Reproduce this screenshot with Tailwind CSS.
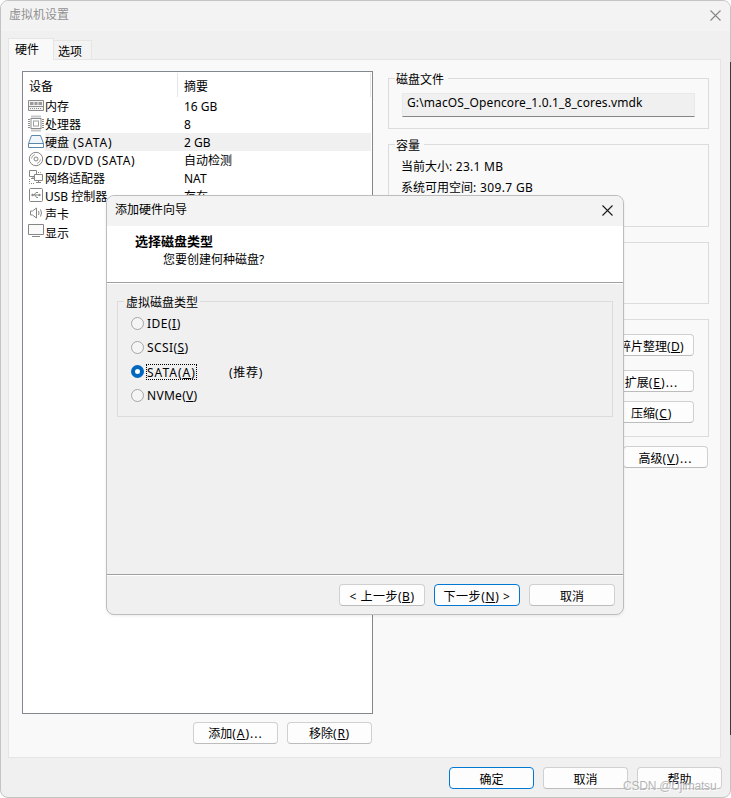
<!DOCTYPE html>
<html lang="zh-CN">
<head>
<meta charset="utf-8">
<title>虚拟机设置</title>
<script src="https://cdn.jsdelivr.net/npm/@tailwindcss/browser@4"></script>
</head>
<body class="w-[731px] h-[798px] overflow-hidden bg-white">
<div class="relative w-[731px] h-[798px] overflow-hidden rounded-[8px] border border-[#c4c4c4] bg-[#f0f0f0] font-['Noto_Sans','Noto_Sans_CJK_SC',sans-serif] text-[12px] leading-[18px] text-black whitespace-nowrap flex flex-col">
  <!-- title bar -->
  <header class="h-[30px] shrink-0 bg-[#f3f3f3] flex items-center justify-between pl-[8px] pr-[9px] text-[#919191]">
    <span class="-mt-[3px]">虚拟机设置</span>
    <svg class="w-[11px] h-[11px] -mt-[1px]" viewBox="0 0 11 11" fill="none" stroke="#858585" stroke-width="1.1"><path d="M.5 .5l10 10M10.5 .5l-10 10"/></svg>
  </header>
  <!-- tabs -->
  <nav class="h-[28px] shrink-0 flex items-end pl-[7px]">
    <div class="relative z-10 -mb-px w-[46px] h-[22px] bg-[#f9f9f9] border border-b-0 border-[#e5e5e5] pl-[6px] pt-[2px]">硬件</div>
    <div class="w-[38px] h-[19px] bg-[#f3f3f3] border border-l-0 border-b-0 border-[#e5e5e5] pl-[4px] pt-[2px] leading-[17px]">选项</div>
  </nav>
  <!-- tab page -->
  <main class="ml-[7px] w-[713px] h-[699px] shrink-0 bg-[#f9f9f9] border border-[#e5e5e5] flex pl-[13px] pt-[11px]">
    <section class="w-[351px] shrink-0">
      <div class="h-[643px] bg-white border border-[#828790] leading-[20px]">
        <div class="h-[25px] flex items-center pt-[3px] leading-[18px]">
          <span class="w-[155px] h-[24px] -mt-[2px] pt-[5px] pl-[6px] border-r border-[#e5e5e5]">设备</span>
          <span class="w-[193px] h-[24px] -mt-[2px] pt-[5px] pl-[6px] border-r border-[#e5e5e5]">摘要</span>
        </div>
        <div class="flex h-[18px]"><span class="w-[22px] pl-[5px]"><svg class="w-[16px] h-[16px]" viewBox="0 0 16 16" fill="none" stroke="#8c8c8c"><path fill="#f3f3f3" d="M.5 3.500h15v10H.5z"/><path fill="#9a9a9a" stroke="none" d="M2 5h3.500v3H2zM6.500 5h3v3h-3zM10.500 5H14v3h-3.500z"/><path d="M1 9.500h14"/><path stroke-dasharray="1 1" d="M2 11.500h12"/></svg></span><span class="w-[139px]">内存</span><span>16 GB</span></div>
        <div class="flex h-[18px]"><span class="w-[22px] pl-[5px]"><svg class="w-[16px] h-[17px]" viewBox="0 0 16 17" fill="none" stroke="#8c8c8c"><rect x="3" y="3.500" width="10" height="10"/><rect x="5.500" y="6" width="5" height="5" stroke="#a0a0a0"/><path stroke-width="2" stroke-dasharray="1 1" d="M3.500 1.500h10M3.500 15.500h10M1 4v10M15 4v10"/></svg></span><span class="w-[139px]">处理器</span><span>8</span></div>
        <div class="flex h-[18px]"><span class="w-[22px] pl-[5px]"><svg class="w-[16px] h-[16px]" viewBox="0 0 16 16" stroke="#5b87ad"><path fill="#f0f6fb" d="M3.500 2.500h9l3 8H.5z"/><path fill="#fff" d="M.5 10.500h15v4H.5z"/></svg></span><span class="w-[326px] bg-[#f0f0f0] flex"><span class="w-[139px]">硬盘<span class="tracking-[.9px]"> (SATA)</span></span><span>2 GB</span></span></div>
        <div class="flex h-[18px]"><span class="w-[22px] pl-[5px]"><svg class="w-[16px] h-[16px]" viewBox="0 0 16 16" fill="none" stroke="#868686"><circle cx="8" cy="8" r="6.700"/><circle cx="8" cy="8" r="2"/><path stroke="#aaa" d="M3.500 7.500A5 5 0 0 1 7 3.500M12.500 8.500A5 5 0 0 1 9 12.500"/></svg></span><span class="w-[139px] tracking-[.58px]">CD/DVD (SATA)</span><span>自动检测</span></div>
        <div class="flex h-[18px]"><span class="w-[22px] pl-[5px]"><svg class="w-[16px] h-[16px]" viewBox="0 0 16 16" fill="none" stroke="#868686"><path d="M1.500 1.500h7v6h-7zM5 7.500v2M3 9.500h3"/><path fill="#fff" d="M6.500 5.500h8v6h-8zM10.500 11.500v2M8 13.500h5"/><path stroke-dasharray="1 1" d="M10 3.500h2.500v2M1.500 10v4.500H7"/></svg></span><span class="w-[139px]">网络适配器</span><span>NAT</span></div>
        <div class="flex h-[18px]"><span class="w-[22px] pl-[5px]"><svg class="w-[16px] h-[16px]" viewBox="0 0 16 16" fill="none" stroke="#868686"><rect x="1.500" y="1.500" width="13" height="13" rx="1"/><path d="M4.500 8h7M6 8l2-2.500h2M7 8l1.500 2.500H10"/><circle cx="4.500" cy="8" r=".8" fill="#868686"/><path fill="#868686" d="M11 7l1.500 1L11 9z"/></svg></span><span class="w-[139px]">USB 控制器</span><span>存在</span></div>
        <div class="flex h-[18px]"><span class="w-[22px] pl-[5px]"><svg class="w-[16px] h-[16px]" viewBox="0 0 16 16" fill="none" stroke="#868686"><path d="M2.500 6h2L8.500 3v10L4.500 10h-2z"/><path d="M10.500 6q1 2 0 4M12.500 4.500q2 3.500 0 7"/></svg></span><span>声卡</span></div>
        <div class="flex h-[18px]"><span class="w-[22px] pl-[5px]"><svg class="w-[16px] h-[16px]" viewBox="0 0 16 16" fill="none" stroke="#868686"><path fill="#fafafa" d="M.5 1.500h15v10H.5z"/><path d="M4 13.500h8"/></svg></span><span class="pt-px">显示</span></div>
      </div>
      <div class="flex justify-end gap-[9px] mt-[8px] mr-px text-center">
        <button class="w-[85px] h-[22px] rounded-[4px] bg-[#fdfdfd] border border-[#d0d0d0] border-b-[#bcbcbc] leading-[20px] pt-px">添加<span class="tracking-[1px]">(<u>A</u>)...</span></button>
        <button class="w-[85px] h-[22px] rounded-[4px] bg-[#fdfdfd] border border-[#d0d0d0] border-b-[#bcbcbc] leading-[20px] pt-px">移除<span class="tracking-[.7px]">(<u>R</u>)</span></button>
      </div>
    </section>
    <section class="ml-[15px] mt-[7px] w-[321px] shrink-0 flex flex-col gap-[15px]">
      <div class="h-[51px] border border-[#dcdcdc]">
        <div class="w-[53px] h-[18px] -mt-[8px] ml-[6px] pl-[1px] bg-[#f9f9f9]">磁盘文件</div>
        <div class="ml-[13px] mt-[4px] w-[293px] h-[24px] bg-[#f0f0f0] border border-[#e9e9e9] border-b-[#868686] pl-[4px] leading-[18px] tracking-[.12px]">G:\macOS_Opencore_1.0.1_8_cores.vmdk</div>
      </div>
      <div class="h-[83px] border border-[#dcdcdc]">
        <div class="w-[29px] h-[18px] -mt-[8px] ml-[6px] pl-[1px] bg-[#f9f9f9]">容量</div>
        <div class="ml-[12px] mt-[3px]">当前大小<span class="tracking-[.25px]">: 23.1 MB</span></div>
        <div class="ml-[12px] mt-[3px]">系统可用空间<span class="tracking-[.35px]">: 309.7 GB</span></div>
      </div>
      <div class="h-[62px] border border-[#dcdcdc]"></div>
      <div class="h-[118px] border border-[#dcdcdc] flex flex-col items-end pr-[14px] pt-[14px] text-center">
        <button class="w-[85px] h-[22px] rounded-[4px] bg-[#fdfdfd] border border-[#d0d0d0] border-b-[#bcbcbc] leading-[20px] pt-[2px]">碎片整理<span class="tracking-[.4px]">(<u>D</u>)</span></button>
        <button class="mt-[14px] w-[85px] h-[22px] rounded-[4px] bg-[#fdfdfd] border border-[#d0d0d0] border-b-[#bcbcbc] leading-[20px] pt-[2px]">扩展<span class="tracking-[1px]">(<u>E</u>)...</span></button>
        <button class="mt-[9px] w-[85px] h-[22px] rounded-[4px] bg-[#fdfdfd] border border-[#d0d0d0] border-b-[#bcbcbc] leading-[20px] pt-[2px]">压缩<span class="tracking-[.7px]">(<u>C</u>)</span></button>
      </div>
      <button class="-mt-[6px] mr-px self-end w-[85px] h-[22px] rounded-[4px] bg-[#fdfdfd] border border-[#d0d0d0] border-b-[#bcbcbc] leading-[20px] pt-[2px]">高级<span class="tracking-[1px]">(<u>V</u>)...</span></button>
    </section>
  </main>
  <!-- footer buttons -->
  <footer class="mt-[9px] flex justify-end gap-[9px] pr-[8px] text-center">
    <button class="w-[85px] h-[22px] rounded-[4px] bg-[#fdfdfd] border border-[#0078d4] leading-[20px] pt-[2px]">确定</button>
    <button class="w-[85px] h-[22px] rounded-[4px] bg-[#fdfdfd] border border-[#d0d0d0] border-b-[#bcbcbc] leading-[20px] pt-[2px]">取消</button>
    <button class="w-[85px] h-[22px] rounded-[4px] bg-[#fdfdfd] border border-[#d0d0d0] border-b-[#bcbcbc] leading-[20px] pt-[2px]">帮助</button>
  </footer>

  <!-- add hardware wizard -->
  <div class="absolute left-[105px] top-[194px] w-[518px] h-[420px] rounded-[8px] border border-[#bdbdbd] bg-[#f0f0f0] overflow-hidden shadow-[0_1px_3px_rgba(0,0,0,0.08)] flex flex-col">
    <div class="h-[30px] shrink-0 bg-[#f3f3f3] flex items-center justify-between pl-[8px] pr-[10px]">
      <span class="-mt-[3px]">添加硬件向导</span>
      <svg class="w-[11px] h-[11px] -mt-[2px]" viewBox="0 0 11 11" fill="none" stroke="#1a1a1a" stroke-width="1.100"><path d="M.5 .5l10 10M10.500 .5l-10 10"/></svg>
    </div>
    <div class="h-[57px] shrink-0 bg-white border-b border-[#a0a0a0] pt-[6px]">
      <div class="pl-[28px] font-bold text-[13px]">选择磁盘类型</div>
      <div class="pl-[56px] pt-px">您要创建何种磁盘?</div>
    </div>
    <div class="h-px shrink-0 bg-white"></div>
    <div class="mt-[17px] ml-[10px] w-[496px] h-[116px] shrink-0 border border-[#dcdcdc]">
      <div class="w-[76px] h-[18px] -mt-[8px] ml-[6px] pl-[2px] bg-[#f0f0f0]">虚拟磁盘类型</div>
      <div class="ml-[13px] h-[24px] flex items-center"><i class="w-[13px] h-[13px] -mt-[2px] rounded-full border border-[#a6a6a6] bg-[#f5f5f5]"></i><span class="ml-[3px] tracking-[.5px]">IDE(<u>I</u>)</span></div>
      <div class="ml-[13px] h-[24px] flex items-center"><i class="w-[13px] h-[13px] -mt-[2px] rounded-full border border-[#a6a6a6] bg-[#f5f5f5]"></i><span class="ml-[3px] tracking-[.4px]">SCSI(<u>S</u>)</span></div>
      <div class="ml-[13px] h-[24px] flex items-center"><i class="w-[13px] h-[13px] -mt-[2px] rounded-full border-4 border-[#0067c0] bg-white"></i><span class="ml-[2px] w-[51px] h-[16px] -mt-px leading-[15px] border border-dotted border-black tracking-[1px]">SATA(<u>A</u>)</span><span class="ml-[32px] pt-px tracking-[.7px]">(推荐)</span></div>
      <div class="ml-[13px] h-[24px] flex items-center"><i class="w-[13px] h-[13px] -mt-[2px] rounded-full border border-[#a6a6a6] bg-[#f5f5f5]"></i><span class="ml-[3px] tracking-[.3px]">NVMe(<u>V</u>)</span></div>
    </div>
    <div class="mt-auto h-[40px] shrink-0 border-t border-[#a0a0a0]">
      <div class="h-px bg-white"></div>
      <div class="flex justify-end gap-[9px] pr-[8px] mt-[8px] text-center">
        <button class="w-[86px] h-[22px] rounded-[4px] bg-[#fdfdfd] border border-[#d0d0d0] border-b-[#bcbcbc] leading-[20px] pt-[2px] tracking-[.5px]">&lt; 上一步(<u>B</u>)</button>
        <button class="w-[86px] h-[22px] rounded-[4px] bg-[#fdfdfd] border border-[#0078d4] leading-[20px] pt-[2px] tracking-[.6px]">下一步(<u>N</u>) &gt;</button>
        <button class="w-[86px] h-[22px] rounded-[4px] bg-[#fdfdfd] border border-[#d0d0d0] border-b-[#bcbcbc] leading-[20px] pt-[2px]">取消</button>
      </div>
    </div>
  </div>
  <!-- watermark -->
  <div class="absolute left-[622px] top-[777px] text-[12px] leading-[16px] -tracking-[.2px] text-[#b5b5b5] font-['Liberation_Sans',sans-serif] [text-shadow:1px_1px_0_rgba(255,255,255,.8)]">CSDN @Ujimatsu</div>
</div>
<div class="absolute left-[730px] top-[62px] w-px h-[673px] bg-[#3a3a3a]"></div>
</body>
</html>
